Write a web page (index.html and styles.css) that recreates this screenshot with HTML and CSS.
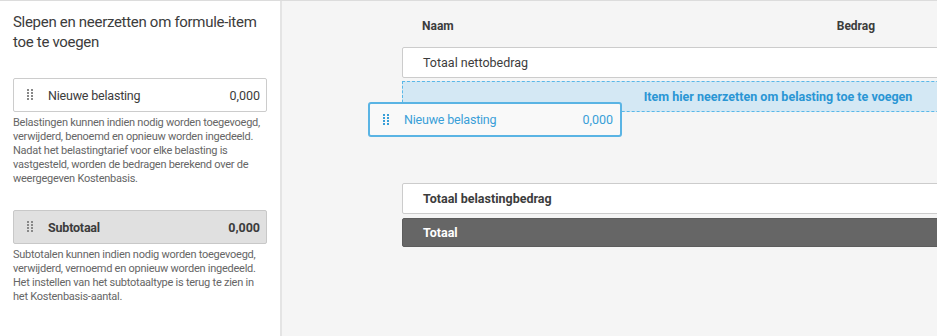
FILE: index.html
```html
<!DOCTYPE html>
<html lang="nl">
<head>
<meta charset="utf-8">
<link rel="stylesheet" href="styles.css">
</head>
<body>
<div class="page">
  <aside class="side">
    <h2 class="title">Slepen en neerzetten om formule-item<br>toe te voegen</h2>
    <div class="card">
      <svg class="grip" width="6" height="12" viewBox="0 0 6 12"><g fill="#888"><rect x="0" y="0" width="2" height="2"/><rect x="4" y="0" width="2" height="2"/><rect x="0" y="3" width="2" height="2"/><rect x="4" y="3" width="2" height="2"/><rect x="0" y="6" width="2" height="2"/><rect x="4" y="6" width="2" height="2"/><rect x="0" y="9" width="2" height="2"/><rect x="4" y="9" width="2" height="2"/></g></svg>
      <span class="card-name">Nieuwe belasting</span>
      <span class="card-val">0,000</span>
    </div>
    <p class="desc">Belastingen kunnen indien nodig worden toegevoegd,<br>verwijderd, benoemd en opnieuw worden ingedeeld.<br>Nadat het belastingtarief voor elke belasting is<br>vastgesteld, worden de bedragen berekend over de<br>weergegeven Kostenbasis.</p>
    <div class="card card-sub">
      <svg class="grip" width="6" height="12" viewBox="0 0 6 12"><g fill="#888"><rect x="0" y="0" width="2" height="2"/><rect x="4" y="0" width="2" height="2"/><rect x="0" y="3" width="2" height="2"/><rect x="4" y="3" width="2" height="2"/><rect x="0" y="6" width="2" height="2"/><rect x="4" y="6" width="2" height="2"/><rect x="0" y="9" width="2" height="2"/><rect x="4" y="9" width="2" height="2"/></g></svg>
      <span class="card-name">Subtotaal</span>
      <span class="card-val">0,000</span>
    </div>
    <p class="desc">Subtotalen kunnen indien nodig worden toegevoegd,<br>verwijderd, vernoemd en opnieuw worden ingedeeld.<br>Het instellen van het subtotaaltype is terug te zien in<br>het Kostenbasis-aantal.</p>
  </aside>
  <main class="main">
    <div class="table">
      <div class="thead">
        <span class="th-name">Naam</span>
        <span class="th-amount">Bedrag</span>
      </div>
      <div class="row">Totaal nettobedrag</div>
      <div class="drop">Item hier neerzetten om belasting toe te voegen</div>
      <div class="spacer"></div>
      <div class="row row-bold">Totaal belastingbedrag</div>
      <div class="row row-total">Totaal</div>
      <div class="drag">
        <svg class="grip" width="6" height="12" viewBox="0 0 6 12"><g fill="#3a9fd8"><rect x="0" y="0" width="2" height="2"/><rect x="4" y="0" width="2" height="2"/><rect x="0" y="3" width="2" height="2"/><rect x="4" y="3" width="2" height="2"/><rect x="0" y="6" width="2" height="2"/><rect x="4" y="6" width="2" height="2"/><rect x="0" y="9" width="2" height="2"/><rect x="4" y="9" width="2" height="2"/></g></svg>
        <span class="card-name">Nieuwe belasting</span>
        <span class="card-val">0,000</span>
      </div>
    </div>
  </main>
</div>
</body>
</html>
```
FILE: styles.css
```css
* { box-sizing: border-box; }
html, body { margin: 0; padding: 0; }
body {
  font-family: Roboto, "Noto Sans", sans-serif;
  color: #3c3c3c;
  background: #f5f5f5;
  overflow: hidden;
}
.page {
  display: flex;
  width: 937px;
  height: 336px;
  border-top: 1px solid #dcdcdc;
  overflow: hidden;
}
.side {
  width: 282px;
  flex: none;
  background: #fff;
  border-right: 2px solid #e4e4e4;
  padding: 0 13px;
}
.title {
  margin: 11px 0 0;
  font-size: 15px;
  font-weight: 400;
  line-height: 20px;
  letter-spacing: -0.3px;
  color: #3c3c3c;
  white-space: nowrap;
}
.card {
  display: flex;
  align-items: center;
  height: 34px;
  margin-top: 26px;
  background: #fff;
  border: 1px solid #ccc;
  border-radius: 2px;
  padding: 0 6px 0 13px;
  font-size: 12.5px;
}
.grip { flex: none; }
.card-name { margin-left: 15px; flex: 1; letter-spacing: -0.2px; }
.card-val { flex: none; }
.card-sub {
  margin-top: 24px;
  background: #e0e0e0;
  border-color: #c8c8c8;
  font-weight: 700;
}
.desc {
  margin: 4px 0 0;
  font-size: 11px;
  line-height: 14px;
  letter-spacing: -0.25px;
  color: #666;
  white-space: nowrap;
}
.main {
  flex: 1;
  padding-left: 120px;
  overflow: hidden;
}
.table {
  position: relative;
  width: 752px;
  padding-top: 18px;
}
.thead {
  display: flex;
  height: 28px;
  align-items: flex-start;
  font-size: 12px;
  font-weight: 700;
  color: #3c3c3c;
}
.th-name { margin-left: 20px; }
.th-amount { margin-left: 383px; }
.row {
  height: 31px;
  display: flex;
  align-items: center;
  padding-left: 20px;
  background: #fff;
  border: 1px solid #ccc;
  border-radius: 2px;
  font-size: 12.5px;
}
.drop {
  height: 31px;
  margin-top: 3px;
  display: flex;
  align-items: center;
  justify-content: center;
  background: #d4e8f4;
  border: 1px dashed #5ab8e8;
  color: #2a96d4;
  font-size: 12.5px;
  font-weight: 700;
}
.spacer { height: 71px; }
.row-bold { font-weight: 700; }
.row-total {
  margin-top: 4px;
  height: 29px;
  background: #666;
  border-color: #5c5c5c;
  color: #fff;
  font-weight: 700;
}
.drag {
  position: absolute;
  left: -34px;
  top: 101px;
  width: 254px;
  height: 35px;
  display: flex;
  align-items: center;
  padding: 0 7px 0 13px;
  background: #f9f9f9;
  border: 2px solid #5ab4e4;
  border-radius: 3px;
  font-size: 12.5px;
  color: #3a9fd8;
}
.drag .card-name { margin-left: 15px; }
```
